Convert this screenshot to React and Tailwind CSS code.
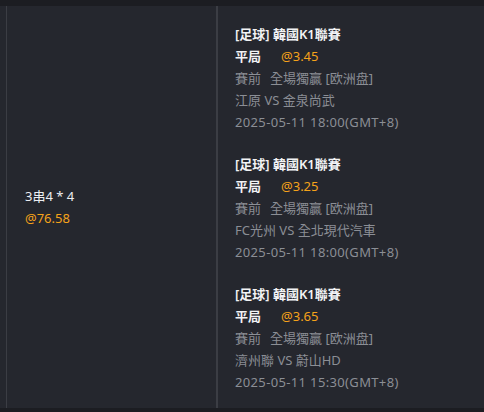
import React from 'react';

const legs = [
  { league: '[足球] 韓國K1聯賽', pick: '平局', odds: '@3.45', match: '江原 VS 金泉尚武', time: '2025-05-11 18:00(GMT+8)' },
  { league: '[足球] 韓國K1聯賽', pick: '平局', odds: '@3.25', match: 'FC光州 VS 全北現代汽車', time: '2025-05-11 18:00(GMT+8)' },
  { league: '[足球] 韓國K1聯賽', pick: '平局', odds: '@3.65', match: '濟州聯 VS 蔚山HD', time: '2025-05-11 15:30(GMT+8)' },
];

export default function App() {
  return (
    <div
      className="w-[484px] h-[412px] bg-[#1c1d22] pt-[6px] text-[13px] leading-[22px] overflow-hidden"
      style={{ fontFamily: '"Noto Sans", "Noto Sans CJK TC", sans-serif' }}
    >
      <div className="flex h-[404px] bg-[#25272e] border-b-2 border-[#1c1d22]">
        <div className="w-[6px] bg-[#25272e]"></div>
        <div className="w-[210px] border-l border-[#3b3d44] flex flex-col justify-center pl-[18px]">
          <div className="text-[#eceef2]">3串4 * 4</div>
          <div className="text-[#f5a31a]">@76.58</div>
        </div>
        <div className="flex-1 border-l-2 border-[#3b3d44] pl-[17px] pt-[17px] flex flex-col gap-5">
          {legs.map((leg, i) => (
            <div key={i} className="flex flex-col">
              <div className="text-[#f2f3f5] font-semibold">{leg.league}</div>
              <div className="flex">
                <span className="text-[#f2f3f5] font-semibold">{leg.pick}</span>
                <span className="text-[#f5a31a] ml-5">{leg.odds}</span>
              </div>
              <div className="text-[#8b8e95] flex gap-[9px]">
                <span>賽前</span>
                <span>全場獨贏 [欧洲盘]</span>
              </div>
              <div className="text-[#8b8e95]">{leg.match}</div>
              <div className="text-[#8b8e95] tracking-[0.35px]">{leg.time}</div>
            </div>
          ))}
        </div>
      </div>
    </div>
  );
}
